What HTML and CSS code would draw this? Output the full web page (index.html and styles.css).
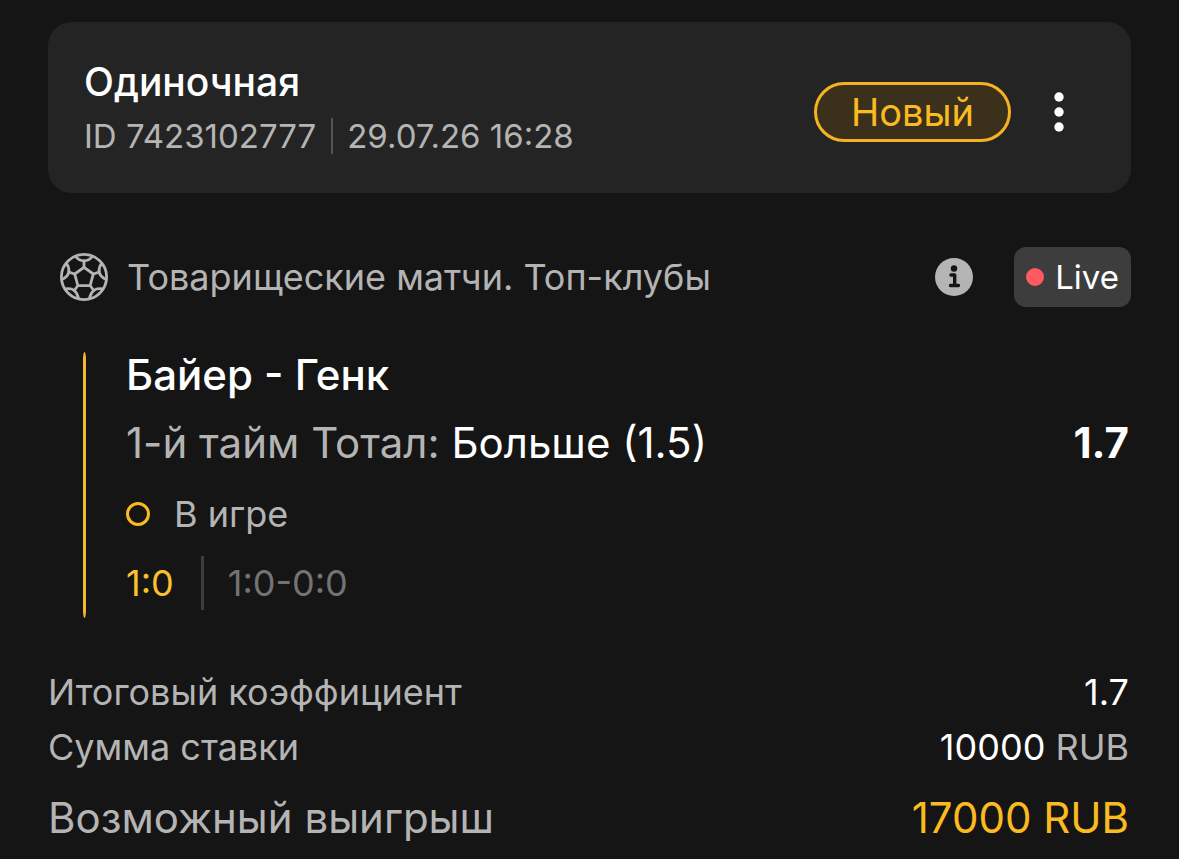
FILE: index.html
```html
<!DOCTYPE html>
<html lang="ru">
<head>
<meta charset="utf-8">
<meta name="viewport" content="width=device-width, initial-scale=1">
<title>Одиночная</title>
<link rel="stylesheet" href="styles.css">
</head>
<body>
<main class="bet">
  <header class="card">
    <div class="card-info">
      <h1 class="card-title">Одиночная</h1>
      <p class="card-meta"><span>ID 7423102777</span><span class="meta-date">29.07.26 16:28</span></p>
    </div>
    <span class="status">Новый</span>
    <button class="menu" type="button" aria-label="Меню">
      <svg width="10" height="40" viewBox="0 0 10 40" fill="#fff"><circle cx="5" cy="5" r="4.700"/><circle cx="5" cy="20" r="4.700"/><circle cx="5" cy="35" r="4.700"/></svg>
    </button>
  </header>
  <section class="league">
    <svg class="ball" width="50" height="50" viewBox="0 0 50 50" fill="none" stroke="#b4b4b4" stroke-width="2.800" stroke-linejoin="round" stroke-linecap="round">
      <circle cx="25" cy="25" r="22.600"/>
      <path d="M25 15.300l9.300 6.700-3.200 11.700H18.900L15.700 22z"/>
      <path d="M25 15V9M34.500 22l5.700-2M31 33.500l3.800 5M19 33.500l-3.800 5M15.500 22l-5.700-2"/>
      <path d="M16.500 4.400Q20 8.800 25 8.800t8.500-4.400M42.500 11.500Q39.500 15.500 40.200 20t6.800 7.400M43.500 37Q38 36 34.800 38.500T30.500 46.500M6.500 37Q12 36 15.200 38.500T19.500 46.500M7.500 11.500Q10.500 15.500 9.800 20T3 27.400"/>
    </svg>
    <h2 class="league-name">Товарищеские матчи. Топ-клубы</h2>
    <button class="info" type="button" aria-label="Информация">
      <svg width="38" height="38" viewBox="0 0 38 38"><circle cx="19" cy="19" r="19" fill="#b4b4b4"/><circle cx="19" cy="10.500" r="3.200" fill="#151515"/><path d="M16 17h3.700v10.500M15.500 27.500h8" fill="none" stroke="#151515" stroke-width="3.400" stroke-linecap="round" stroke-linejoin="round"/></svg>
    </button>
    <span class="live">Live</span>
  </section>
  <section class="event">
    <h3 class="teams">Байер - Генк</h3>
    <div class="pick"><span class="market">1-й тайм Тотал: <span class="white">Больше (1.5)</span></span><strong class="odds">1.7</strong></div>
    <p class="state">В игре</p>
    <p class="score"><span class="total">1:0</span><span class="periods">1:0-0:0</span></p>
  </section>
  <dl class="summary">
    <div class="row"><dt>Итоговый коэффициент</dt><dd>1.7</dd></div>
    <div class="row"><dt>Сумма ставки</dt><dd>10000 <span class="currency">RUB</span></dd></div>
    <div class="row win"><dt>Возможный выигрыш</dt><dd>17000 RUB</dd></div>
  </dl>
</main>
</body>
</html>
```
FILE: styles.css
```css
*, *::before { box-sizing: border-box; }
body, h1, h2, h3, p, dl, dd { margin: 0; }
body {
  background: #151515;
  color: #b4b4b4;
  font-family: Inter, "Liberation Sans", sans-serif;
  font-size: 36px;
  line-height: 44px;
}
svg { display: block; }
button { padding: 0; border: 0; background: none; }
.bet { padding: 22px 48px 0; }
.card {
  display: flex;
  align-items: center;
  padding: 35px 67px 27px 36px;
  border-radius: 24px;
  background: #242424;
}
.card-info { flex: 1; }
.card-title { color: #fff; font-size: 39px; font-weight: 500; line-height: 49px; }
.card-meta { display: flex; align-items: center; font-size: 33px; line-height: 60px; }
.meta-date { margin-left: 15px; padding-left: 14px; border-left: 2px solid #555; line-height: 36px; }
.status {
  padding: 2px 34px;
  border: 3px solid #f5b324;
  border-radius: 30px;
  background: #3a301c;
  color: #fabb20;
  font-size: 38px;
  line-height: 50px;
}
.menu { margin-left: 43px; }
.league { display: flex; align-items: center; margin-top: 54px; padding-left: 11px; }
.league-name { flex: 1; margin-left: 18px; font-size: 36px; font-weight: 400; }
.live {
  display: flex;
  align-items: center;
  gap: 11px;
  margin-left: 41px;
  padding: 8px 12px;
  border-radius: 12px;
  background: #3d3d3d;
  color: #fff;
  font-size: 33px;
}
.live::before { content: ""; width: 18px; height: 18px; border-radius: 50%; background: #ff5a5f; }
.event { position: relative; margin-top: 45px; padding-left: 78px; }
.event::before {
  content: "";
  position: absolute;
  top: 0;
  bottom: 0;
  left: 35px;
  width: 3px;
  border-radius: 50% / 8px;
  background: #f5b930;
}
.teams { color: #fff; font-size: 42px; font-weight: 500; line-height: 46px; }
.pick { display: flex; justify-content: space-between; margin-top: 20px; padding-right: 2px; font-size: 42px; line-height: 50px; }
.white, .odds { color: #fff; }
.odds { font-weight: 700; }
.state { display: flex; align-items: center; gap: 24px; margin-top: 24px; }
.state::before { content: ""; width: 24px; height: 24px; border: 3px solid #fabb20; border-radius: 50%; }
.score { display: flex; margin-top: 20px; padding-bottom: 8px; line-height: 54px; }
.total { color: #fbc02d; }
.periods { margin-left: 27px; padding-left: 24px; border-left: 3px solid #3d3d3d; color: #737373; }
.summary { margin-top: 47px; padding-right: 2px; }
.row { display: flex; justify-content: space-between; line-height: 55px; }
.row dd { color: #fff; }
.row .currency { color: #b4b4b4; }
.win { margin-top: 10px; font-size: 42px; line-height: 66px; }
.row.win dd { color: #fabb20; }
```
